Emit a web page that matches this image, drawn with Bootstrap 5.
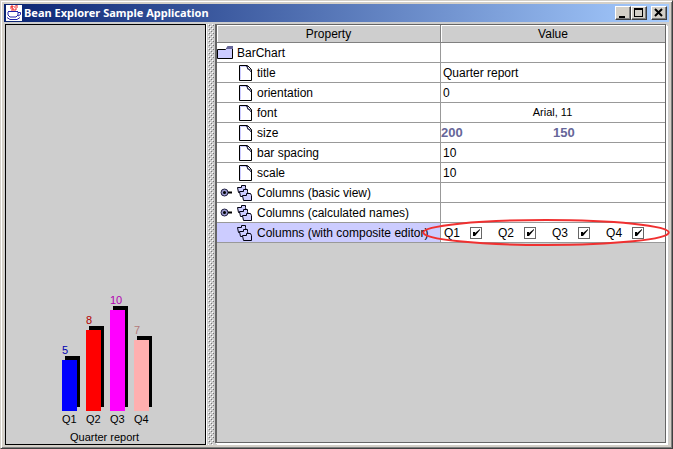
<!DOCTYPE html>
<html lang="en">
<head>
<meta charset="utf-8">
<meta name="viewport" content="width=device-width, initial-scale=1">
<title>Bean Explorer Sample Application</title>
<link href="https://cdn.jsdelivr.net/npm/bootstrap@5.3.0/dist/css/bootstrap.min.css" rel="stylesheet">
<style>
body{font-family:"Liberation Sans",Arial,sans-serif;font-size:12px;line-height:16px;color:#000;background:#d4d0c8}
svg{display:block;flex:none}
.win{border:1px solid;border-color:#d4d0c8 #404040 #404040 #d4d0c8;box-shadow:inset 1px 1px #fff,inset -1px -1px #808080;padding:3px}
.titlebar{height:18px;background:linear-gradient(90deg,#0a2472,#a6ccff);color:#fff;padding:0 2px}
.titlebar h1{font:bold 11px/18px "Noto Sans","Open Sans",sans-serif;margin:0;padding-left:2px}
.winbtn{width:16px;height:14px;padding:0;border:1px solid;border-color:#fff #404040 #404040 #fff;background:#d4d0c8;box-shadow:inset -1px -1px #808080}
.work{background:#cecece;padding:2px 1px 0}
.chart{width:201px;border:1px solid #000;font-size:11px;line-height:12px}
.bars{gap:9px;padding-left:56px;margin-bottom:6px}
.bars>div{width:15px}
.bar{box-shadow:3px -4px #000;margin:4px 0 2px}
.caption-line{padding:0 2px 1px 0}
.v1{color:#0000b2}.v2{color:#b20000}.v3{color:#b200b2}.v4{color:#b27a7a}
.b1{background:#00f}.b2{background:#f00}.b3{background:#f0f}.b4{background:#ffafaf}
.grip{width:6px;background:url("data:image/svg+xml,%3Csvg xmlns='http://www.w3.org/2000/svg' width='4' height='4' shape-rendering='crispEdges'%3E%3Cpath d='M0 0h1v1H0zM2 2h1v1H2z' fill='%23fff'/%3E%3Cpath d='M1 1h1v1H1zM3 3h1v1H3z' fill='%23777'/%3E%3C/svg%3E")}
.splitter{width:9px;padding:0 1px 0 1px;border-left:1px solid #fff}
.pane{border:solid #666;border-width:1px 1px 1px 2px;box-shadow:1px 1px #fff,2px 2px #fff;margin:0 2px 2px 0;min-width:0}
.props{table-layout:fixed;border-collapse:separate;border-spacing:0;width:100%}
.props th{height:18px;padding:0;font-weight:400;text-align:center;background:#cecece;border:solid #808080;border-width:0 1px 1px 0;box-shadow:inset 1px 1px #fff}
.props td{height:20px;padding:0 0 0 2px;background:#fff;border:solid #999;border-width:0 1px 1px 0;white-space:nowrap}
.props th:last-child,.props td:last-child{border-right:0}
.props td.picked{background:#ccf}
.node{gap:5px;height:19px}
.node>span:last-child{padding-top:1px}
.root{gap:4px}
.leaf{padding-left:20px}
.branch{padding-left:1px}
.knob{width:12px;height:9px;padding:0;border:0;background:none;display:block}
.size-val{color:#669;font-size:13px;font-weight:700}
.size-val span{flex:1 0 0}
.props .font-val{font-size:11px;text-align:center;padding:0 1px 2px 0}
.checks{gap:16px;padding-left:1px}
.checks label{gap:10px}
.tick{appearance:none;width:12px;height:12px;margin:0;border:1px solid #666;background:#fff url("data:image/svg+xml,%3Csvg xmlns='http://www.w3.org/2000/svg' viewBox='0 0 10 10'%3E%3Cpath d='M2 4v4h2l5-6V1L4 5V4z' fill='%23000'/%3E%3C/svg%3E") center/10px no-repeat;box-shadow:1px 1px #fff}
.ring{left:-19px;top:-4px;width:calc(100% + 24px);height:27px;pointer-events:none;overflow:visible}
</style>
<script src="https://cdn.jsdelivr.net/npm/bootstrap@5.3.0/dist/js/bootstrap.bundle.min.js"></script>
</head>
<body>
<svg width="0" height="0" class="position-absolute" aria-hidden="true">
<defs>
<symbol id="page" viewBox="0 0 13 16"><path d="M.5.5h8l4 4v11H.5z" fill="#fff" stroke="#000"/><path d="M1.500 14.500V1.500H7" stroke="#ccf" fill="none"/><path d="M7 1l5 6M8.500 1v3l3.500 1" fill="none" stroke="#335"/></symbol>
<symbol id="stack" viewBox="0 0 15 16"><g fill="#ccf" stroke="#001"><path d="M.5 2.500h4v-2h4v2l1 5h-8z"/><path d="M2.500 6.500h4v-2h4v2l1 5h-8z"/><path d="M5.500 10.500h4v-2h4l1 2v5h-8z"/></g></symbol>
<symbol id="key" viewBox="0 0 12 9"><circle cx="4.500" cy="4.500" r="3.500" fill="#99c" stroke="#224"/><circle cx="4.500" cy="4.500" r="1.500"/><path d="M8 4.500h4" stroke="#000" stroke-width="2"/></symbol>
</defs>
</svg>
<main class="win min-vh-100 d-flex flex-column">
<header class="titlebar d-flex align-items-center">
<svg width="16" height="16" viewBox="0 0 16 16"><path fill="#fff" d="M0 0h16v16H0z"/><path d="M5 1h2v1H5zM9 0h2v1M4 3h3M8 2h4M5 5h5M7 3v2M10 3v2" stroke="#e22" fill="none"/><path d="M2 6.500h10M2 7v3l2 2h6l2-2V7M12 7.500h2.500v2L12 11M1 12.500l3 2h7l3-2" stroke="#22a" fill="none"/></svg>
<h1 class="flex-grow-1">Bean Explorer Sample Application</h1>
<button class="winbtn" aria-label="Minimize"><svg width="14" height="12"><path d="M3 9h6v2H3z"/></svg></button>
<button class="winbtn" aria-label="Maximize"><svg width="14" height="12"><path d="M2 1h9v9H2zM3 3v6h7V3z" fill-rule="evenodd"/></svg></button>
<button class="winbtn ms-1" aria-label="Close"><svg width="14" height="12"><path d="m3 2 7 7m0-7-7 7" stroke="#000" stroke-width="2"/></svg></button>
</header>
<div class="work flex-grow-1 d-flex">
<section class="chart flex-shrink-0 d-flex flex-column justify-content-end" aria-label="Quarter report chart">
<div class="bars d-flex align-items-end">
<div><span class="v1">5</span><div class="bar b1" style="height:51px"></div>Q1</div>
<div><span class="v2">8</span><div class="bar b2" style="height:81px"></div>Q2</div>
<div><span class="v3">10</span><div class="bar b3" style="height:101px"></div>Q3</div>
<div><span class="v4">7</span><div class="bar b4" style="height:71px"></div>Q4</div>
</div>
<div class="caption-line text-center">Quarter report</div>
</section>
<div class="splitter d-flex"><div class="grip"></div></div>
<section class="pane flex-grow-1">
<table class="props">
<thead><tr><th scope="col">Property</th><th scope="col">Value</th></tr></thead>
<tbody>
<tr><td class="ps-0"><div class="node root d-flex align-items-center"><svg width="16" height="13" viewBox="0 0 16 13"><path d="M.5 3.500h8l2-2h5v11H.5z" fill="#ccf" stroke="#000"/><path d="M9 2.500 10.500 0H16v3H9z" fill="#669"/></svg><span>BarChart</span></div></td><td></td></tr>
<tr><td><div class="node leaf d-flex align-items-center"><svg width="13" height="16"><use href="#page"/></svg><span>title</span></div></td><td>Quarter report</td></tr>
<tr><td><div class="node leaf d-flex align-items-center"><svg width="13" height="16"><use href="#page"/></svg><span>orientation</span></div></td><td>0</td></tr>
<tr><td><div class="node leaf d-flex align-items-center"><svg width="13" height="16"><use href="#page"/></svg><span>font</span></div></td><td class="font-val">Arial, 11</td></tr>
<tr><td><div class="node leaf d-flex align-items-center"><svg width="13" height="16"><use href="#page"/></svg><span>size</span></div></td><td class="ps-0"><div class="size-val d-flex"><span>200</span><span>150</span></div></td></tr>
<tr><td><div class="node leaf d-flex align-items-center"><svg width="13" height="16"><use href="#page"/></svg><span>bar spacing</span></div></td><td>10</td></tr>
<tr><td><div class="node leaf d-flex align-items-center"><svg width="13" height="16"><use href="#page"/></svg><span>scale</span></div></td><td>10</td></tr>
<tr><td><div class="node branch d-flex align-items-center"><button class="knob" aria-label="Expand basic view"><svg width="12" height="9"><use href="#key"/></svg></button><svg width="15" height="16"><use href="#stack"/></svg><span>Columns (basic view)</span></div></td><td></td></tr>
<tr><td><div class="node branch d-flex align-items-center"><button class="knob" aria-label="Expand calculated names"><svg width="12" height="9"><use href="#key"/></svg></button><svg width="15" height="16"><use href="#stack"/></svg><span>Columns (calculated names)</span></div></td><td></td></tr>
<tr><td class="picked"><div class="node branch d-flex align-items-center"><span class="knob"></span><svg width="15" height="16"><use href="#stack"/></svg><span>Columns (with composite editor)</span></div></td>
<td class="position-relative"><div class="checks d-flex">
<label class="d-flex align-items-center">Q1<input class="tick" type="checkbox" checked></label>
<label class="d-flex align-items-center">Q2<input class="tick" type="checkbox" checked></label>
<label class="d-flex align-items-center">Q3<input class="tick" type="checkbox" checked></label>
<label class="d-flex align-items-center">Q4<input class="tick" type="checkbox" checked></label>
</div><svg class="ring position-absolute" aria-hidden="true"><ellipse cx="50%" cy="50%" rx="49.500%" ry="12.500" fill="none" stroke="#f03030" stroke-width="2"/></svg></td></tr>
</tbody>
</table>
</section>
</div>
</main>
</body>
</html>
